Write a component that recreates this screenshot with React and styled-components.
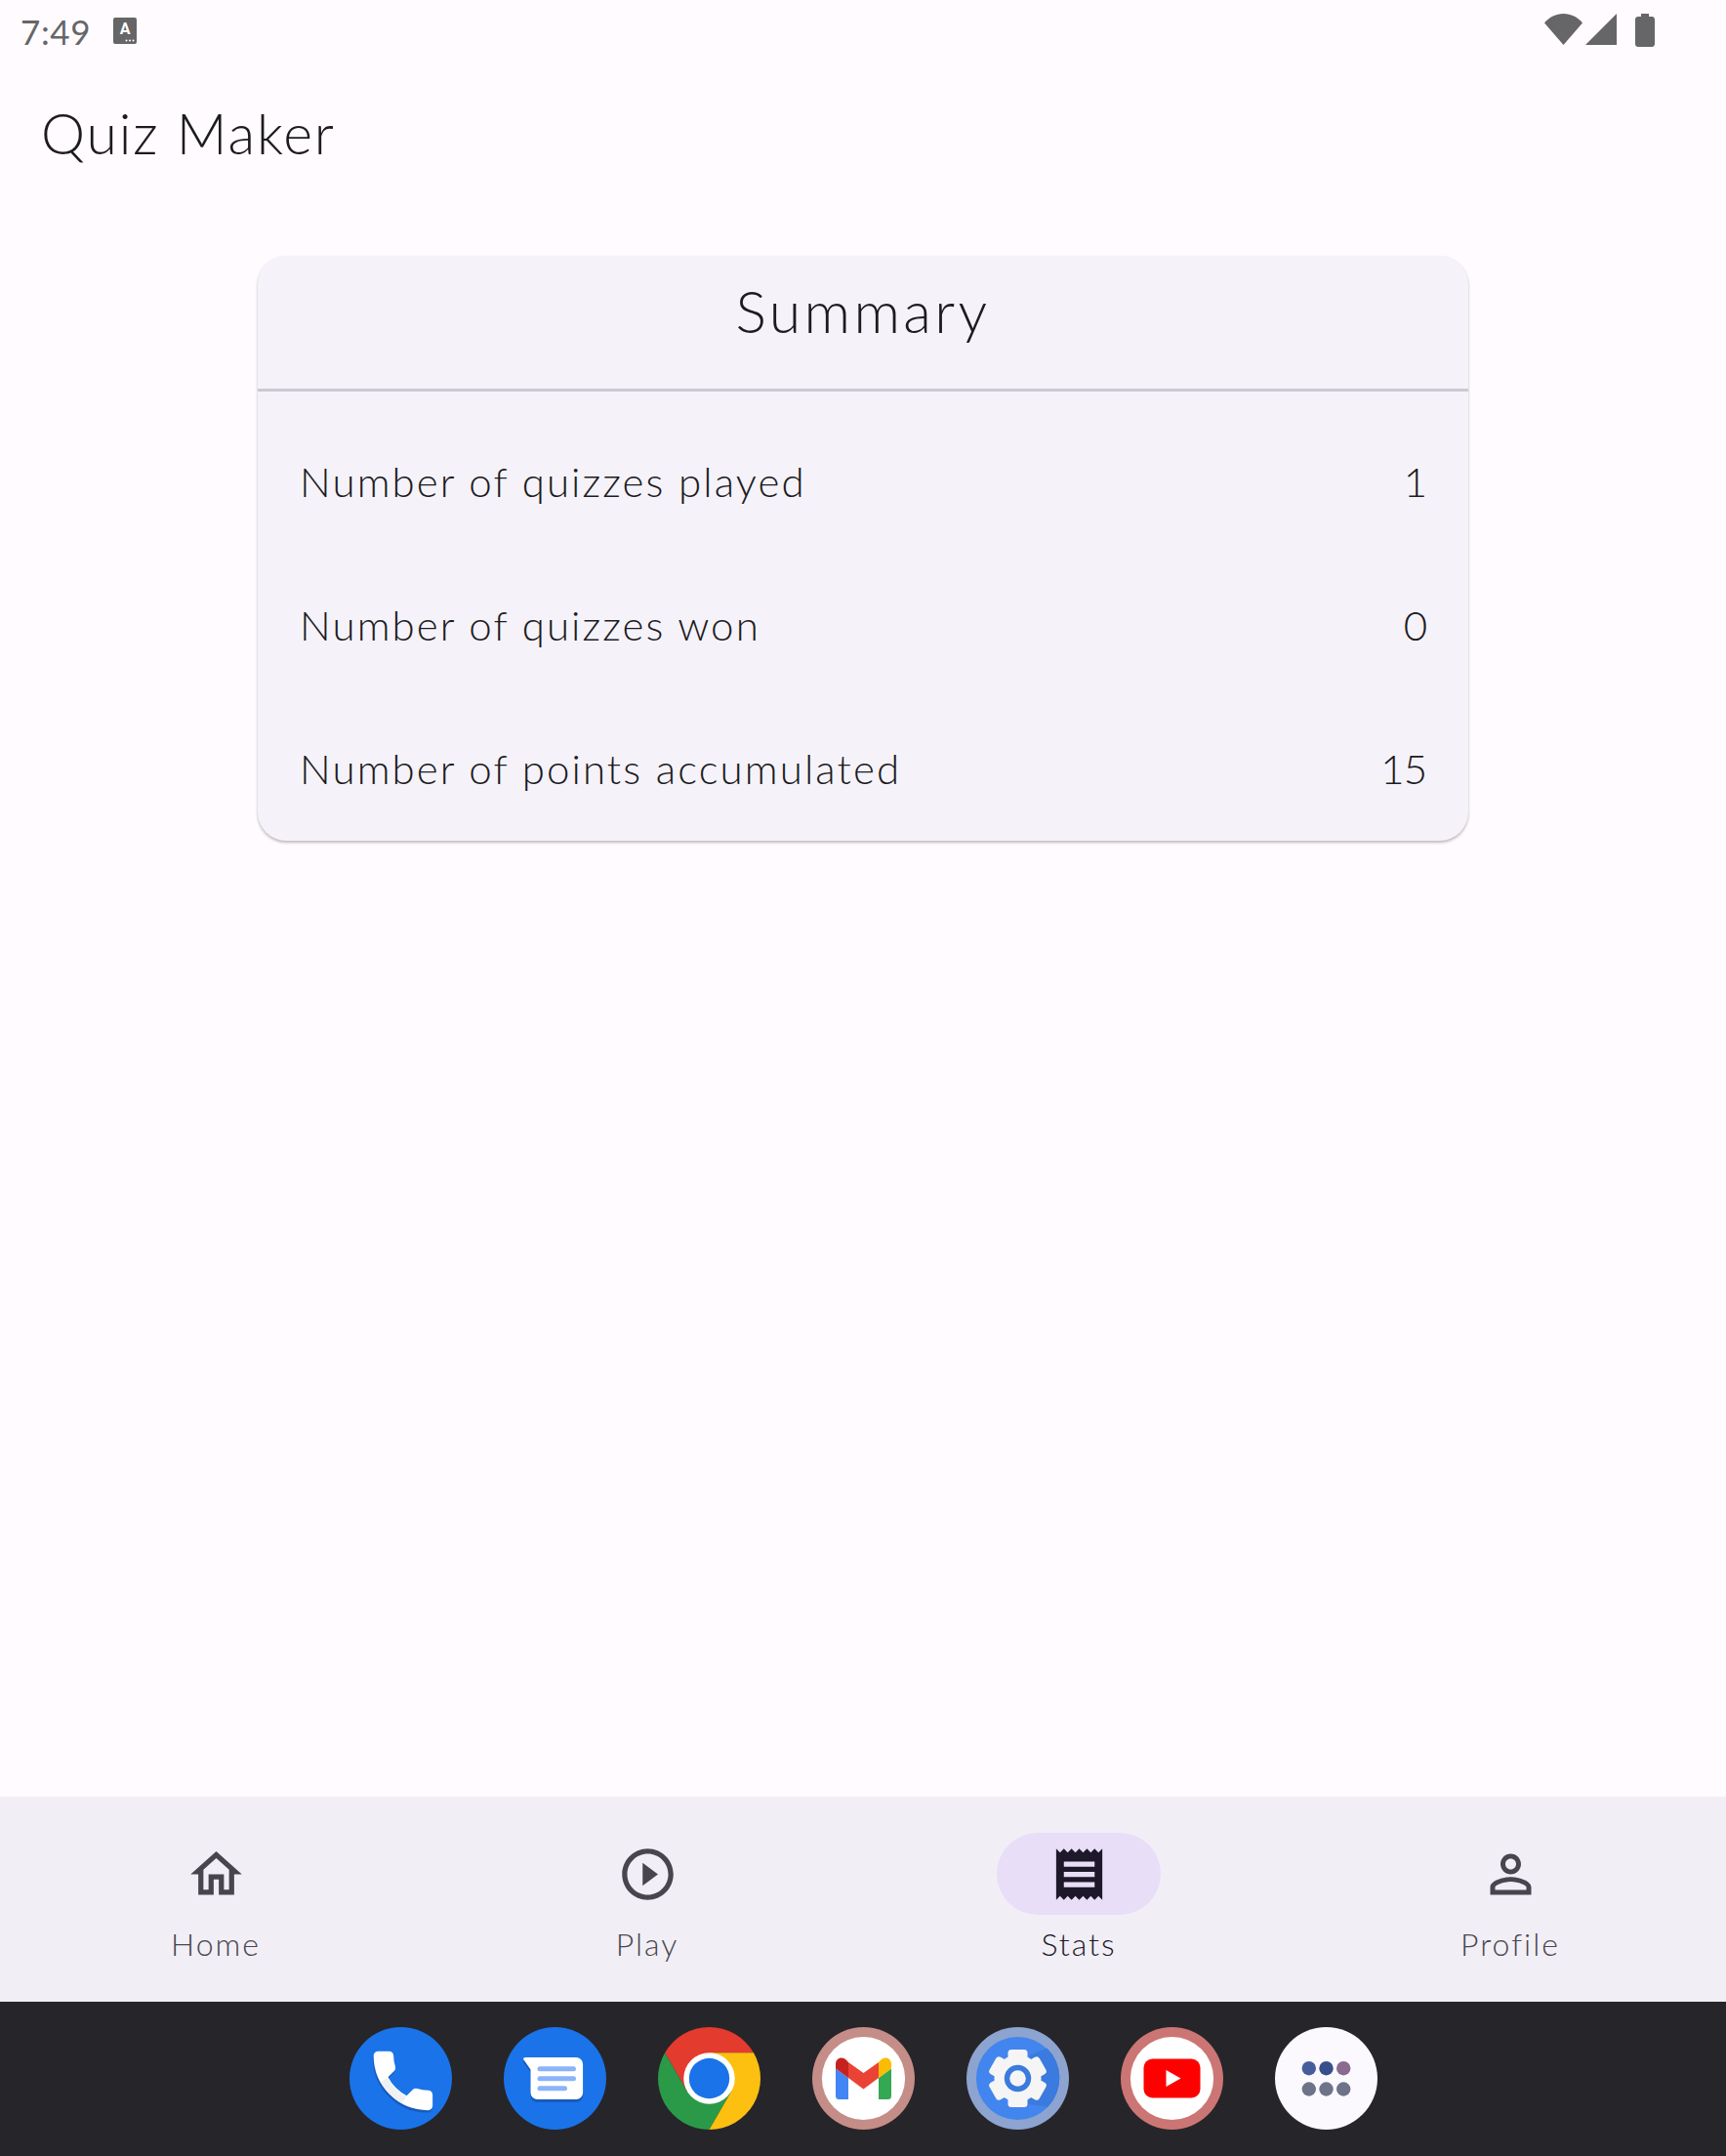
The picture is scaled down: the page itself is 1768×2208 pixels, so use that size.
import React from 'react'
import styled, {createGlobalStyle} from 'styled-components'

const GlobalStyle = createGlobalStyle`
    html, body {
        margin: 0;
        padding: 0;
        background: #fffbfe;
    }
`;

const Screen = styled.div`
    width: 1768px;
    height: 2208px;
    display: flex;
    flex-direction: column;
    overflow: hidden;
    background: #fffbfe;
    color: #1c1b1f;
    font-family: "Lato", "Open Sans", sans-serif;
    font-weight: 300;
`;

//status bar
const StatusBar = styled.div`
    height: 63px;
    flex: none;
    display: flex;
    justify-content: space-between;
    padding: 14px 73px 0 21px;
    box-sizing: border-box;
`;

const StatusLeft = styled.div`
    display: flex;
    align-items: flex-start;
    gap: 23px;
`;

const Clock = styled.span`
    font-size: 35px;
    line-height: 36px;
    letter-spacing: 0.6px;
    color: #666568;
    font-weight: 400;
`;

const StatusRight = styled.div`
    display: flex;
    align-items: flex-start;
`;

const KeyboardIcon = styled.svg`
    margin-top: 4px;
`;

const Signal = styled.svg`
    margin: 0 19px 0 3px;
`;

//app bar
const AppBar = styled.div`
    height: 151px;
    flex: none;
    padding: 0 42px;
    display: flex;
    align-items: flex-start;
`;

const AppTitle = styled.h1`
    margin: 38px 0 0;
    font-size: 57px;
    line-height: 70px;
    font-weight: 300;
    letter-spacing: 1.9px;
`;

const Content = styled.main`
    flex: 1;
    display: flex;
    justify-content: center;
    align-items: flex-start;
    padding-top: 48px;
`;

//card
const Card = styled.section`
    width: 1240px;
    background: #f5f3f9;
    border-radius: 29px;
    box-shadow: 0 2px 3px rgba(0, 0, 0, 0.26), 0 0 1px rgba(0, 0, 0, 0.05);
`;

const CardHeader = styled.div`
    height: 139px;
    box-sizing: border-box;
    border-bottom: 3px solid #cdc9d3;
    display: flex;
    justify-content: center;
    padding-top: 22px;
    font-size: 59px;
    line-height: 70px;
    letter-spacing: 3.4px;
`;

const CardBody = styled.div`
    padding: 18px 43px 1px 43px;
`;

const Row = styled.div`
    height: 147px;
    display: flex;
    justify-content: space-between;
    align-items: center;
    font-size: 42px;
    letter-spacing: 2.1px;
`;

const Value = styled.span`
    letter-spacing: -1px;
`;

//bottom navigation
const BottomNav = styled.nav`
    height: 210px;
    flex: none;
    display: flex;
    background: #f1eff5;
`;

const NavItem = styled.div`
    flex: 1;
    display: flex;
    flex-direction: column;
    align-items: center;
    padding-top: 37px;
    box-sizing: border-box;
`;

const Pill = styled.div`
    width: 168px;
    height: 84px;
    border-radius: 42px;
    display: flex;
    align-items: center;
    justify-content: center;
    background: ${props => props.$active ? '#e8def8' : 'transparent'};
    color: ${props => props.$active ? '#1d192b' : '#49454f'};
`;

const NavLabel = styled.span`
    margin-top: 10px;
    font-size: 32px;
    line-height: 40px;
    letter-spacing: 2px;
    color: ${props => props.$active ? '#1d192b' : '#49454f'};
`;

//launcher dock
const Dock = styled.footer`
    height: 158px;
    flex: none;
    background: #26252a;
    display: flex;
    justify-content: center;
    align-items: flex-start;
    gap: 53px;
    padding-top: 26px;
    box-sizing: border-box;
`;

const NAV_ICONS = {
    home: 'M12 5.69l5 4.5V18h-2v-6H9v6H7v-7.81l5-4.5M12 3L2 12h3v8h6v-6h2v6h6v-8h3L12 3z',
    play: 'M10 16.5l6-4.5-6-4.5v9zM12 2C6.48 2 2 6.48 2 12s4.48 10 10 10 10-4.48 10-10S17.52 2 12 2zm0 18c-4.41 0-8-3.59-8-8s3.59-8 8-8 8 3.59 8 8-3.59 8-8 8z',
    receipt: 'M18 17H6v-2h12v2zm0-4H6v-2h12v2zm0-4H6V7h12v2zM3 22l1.5-1.5L6 22l1.5-1.5L9 22l1.5-1.5L12 22l1.5-1.5L15 22l1.5-1.5L18 22l1.5-1.5L21 22V2l-1.5 1.5L18 2l-1.5 1.5L15 2l-1.5 1.5L12 2l-1.5 1.5L9 2 7.5 3.5 6 2 4.5 3.5 3 2v20z',
    person: 'M12 5.9c1.16 0 2.1.94 2.1 2.1s-.94 2.1-2.1 2.1S9.9 9.16 9.9 8s.94-2.1 2.1-2.1m0 9c2.97 0 6.1 1.46 6.1 2.1v1.1H5.9V17c0-.64 3.13-2.1 6.1-2.1M12 4C9.79 4 8 5.79 8 8s1.79 4 4 4 4-1.79 4-4-1.79-4-4-4zm0 9c-2.67 0-8 1.34-8 4v3h16v-3c0-2.66-5.33-4-8-4z',
}

const PHONE = 'M6.62 10.79c1.44 2.83 3.76 5.14 6.59 6.59l2.2-2.2c.27-.27.67-.36 1.02-.24 1.12.37 2.33.57 3.57.57.55 0 1 .45 1 1V20c0 .55-.45 1-1 1-9.39 0-17-7.61-17-17 0-.55.45-1 1-1h3.5c.55 0 1 .45 1 1 0 1.25.2 2.45.57 3.57.11.35.03.74-.25 1.02l-2.2 2.2z'

const stats = [
    {label: 'Number of quizzes played', value: 1},
    {label: 'Number of quizzes won', value: 0},
    {label: 'Number of points accumulated', value: 15},
]

const tabs = [
    {label: 'Home', icon: 'home'},
    {label: 'Play', icon: 'play'},
    {label: 'Stats', icon: 'receipt', active: true},
    {label: 'Profile', icon: 'person'},
]

// every dock icon is 105px, with 0,0 in the middle so units are pixels
const DockIcon = ({children}) => (
    <svg width="105" height="105" viewBox="-52.5 -52.5 105 105">{children}</svg>
)

const PhoneIcon = () => (
    <DockIcon>
        <circle r="52.5" fill="#1a73e8" />
        <g transform="translate(-36 -36) scale(3.2)">
            <path d={PHONE} fill="#185abc" stroke="#185abc" strokeWidth="0.9" strokeLinejoin="round" transform="translate(-0.25 0.75)" />
            <path d={PHONE} fill="#fff" stroke="#fff" strokeWidth="0.9" strokeLinejoin="round" />
            <path d="M4.9 12.5L6.9 10.9C8.3 13.6 10.4 15.7 13.1 17.1L11.6 19.2A17 17 0 0 1 4.9 12.5Z" fill="#eff0f3" />
        </g>
    </DockIcon>
)

const BUBBLE = 'M-30 -21.6H21.6a7 7 0 0 1 7 7V14.6a7 7 0 0 1-7 7H-18a7 7 0 0 1-7-7V-9L-32.3-19.6C-33-20.6-31.8-21.6-30-21.6Z'

const MessagesIcon = () => (
    <DockIcon>
        <circle r="52.5" fill="#1a73e8" />
        <path d={BUBBLE} fill="#185abc" transform="translate(0 3)" />
        <path d={BUBBLE} fill="#fff" />
        <rect x="-18" y="-12.3" width="39.5" height="5" rx="2.5" fill="#8ab4f8" />
        <rect x="-18" y="-2.3" width="39.5" height="5" rx="2.5" fill="#8ab4f8" />
        <rect x="-18" y="7.7" width="30.5" height="5" rx="2.5" fill="#8ab4f8" />
    </DockIcon>
)

const ChromeIcon = () => (
    <svg width="105" height="105" viewBox="-50 -50 100 100">
        <path d="M-43.3-25A50 50 0 0 1 43.3-25L0-25L-21.6 12.5Z" fill="#e33b2e" />
        <path d="M-43.3-25A50 50 0 0 0 0 50L21.6 12.5H-21.6Z" fill="#2a9a48" />
        <path d="M43.3-25A50 50 0 0 1 0 50L21.6 12.5L0-25Z" fill="#fdc010" />
        <circle r="25" fill="#fff" />
        <circle r="19.7" fill="#1a73e8" />
    </svg>
)

const GmailIcon = () => (
    <DockIcon>
        <circle r="52.5" fill="#c58d88" />
        <circle r="42.6" fill="#fff" />
        <path d="M-28.5-10V18a3.5 3.5 0 0 0 3.5 3.5H-15.5V-0.5Z" fill="#4285f4" />
        <path d="M15.5-0.5V21.5H25a3.5 3.5 0 0 0 3.5-3.5V-10Z" fill="#34a853" />
        <path d="M15.5-16.5V-0.5L28.5-10V-14.5C28.5-21 21-24 15.5-16.5Z" fill="#fbbc04" />
        <path d="M-15.5-16.5L0-5.5L15.5-16.5V-0.5L0 11L-15.5-0.5Z" fill="#ea4335" />
        <path d="M-28.5-10V-14.5C-28.5-21-21-24-15.5-16.5V-0.5Z" fill="#c5221f" />
    </DockIcon>
)

const SettingsIcon = () => (
    <DockIcon>
        <circle r="52.5" fill="#8ca4cf" />
        <circle r="42.6" fill="#4285ee" />
        <path d="M13-24L30-31A42.6 42.6 0 0 1 31 29L15 27L-10 24Z" fill="#3b7ade" />
        {[0, 60, 120, 180, 240, 300].map(angle => (
            <rect key={angle} x="-10" y="-29.5" width="20" height="16" rx="3.5" fill="#f5f5f5" transform={`rotate(${angle})`} />
        ))}
        <circle r="24" fill="#f5f5f5" />
        <circle r="13.7" fill="#3b7ade" />
        <circle r="8.3" fill="#f5f5f5" />
    </DockIcon>
)

const YoutubeIcon = () => (
    <DockIcon>
        <circle r="52.5" fill="#cb7674" />
        <circle r="42.6" fill="#fff" />
        <rect x="-29" y="-20" width="58" height="40" rx="9" fill="#ff0000" />
        <path d="M-6-8.5L9 0L-6 8.5Z" fill="#fff" />
    </DockIcon>
)

const AppsIcon = () => (
    <DockIcon>
        <circle r="52.5" fill="#fbf9fe" />
        <circle cx="-17.7" cy="-10.3" r="7.2" fill="#475d9b" />
        <circle cx="0" cy="-10.3" r="7.2" fill="#394f8c" />
        <circle cx="17.7" cy="-10.3" r="7.2" fill="#8a6a8e" />
        <circle cx="-17.7" cy="11" r="7.2" fill="#6f7388" />
        <circle cx="0" cy="11" r="7.2" fill="#6f7388" />
        <circle cx="17.7" cy="11" r="7.2" fill="#6f7388" />
    </DockIcon>
)

export default function App() {
    return (
        <Screen>
            <GlobalStyle />

            <StatusBar>
                <StatusLeft>
                    <Clock>7:49</Clock>
                    <KeyboardIcon width="24" height="27" viewBox="0 0 24 27">
                        <rect width="24" height="27" rx="2" fill="#666568" />
                        <text x="12" y="17" textAnchor="middle" fontSize="16" fontWeight="700" fontFamily="Roboto, sans-serif" fill="#fff">A</text>
                        <circle cx="13.5" cy="23.5" r="1" fill="#fff" />
                        <circle cx="17" cy="23.5" r="1" fill="#fff" />
                        <circle cx="20.5" cy="23.5" r="1" fill="#fff" />
                    </KeyboardIcon>
                </StatusLeft>
                <StatusRight>
                    <svg width="39" height="32" viewBox="0 0 39 32">
                        <path d="M0 9.5C5 3.5 12 0 19.5 0S34 3.5 39 9.5L19.5 32Z" fill="#666568" />
                    </svg>
                    <Signal width="32" height="32" viewBox="0 0 32 32">
                        <path d="M32 0V32H0Z" fill="#666568" />
                    </Signal>
                    <svg width="20" height="34" viewBox="0 0 20 34">
                        <path d="M6 0H14V3H17C18.7 3 20 4.3 20 6V31C20 32.7 18.7 34 17 34H3C1.3 34 0 32.7 0 31V6C0 4.3 1.3 3 3 3H6Z" fill="#666568" />
                    </svg>
                </StatusRight>
            </StatusBar>

            <AppBar>
                <AppTitle>Quiz Maker</AppTitle>
            </AppBar>

            <Content>
                <Card>
                    <CardHeader>Summary</CardHeader>
                    <CardBody>
                        {stats.map((stat, key) => (
                            <Row key={key}>
                                <span>{stat.label}</span>
                                <Value>{stat.value}</Value>
                            </Row>
                        ))}
                    </CardBody>
                </Card>
            </Content>

            <BottomNav>
                {tabs.map(tab => (
                    <NavItem key={tab.label}>
                        <Pill $active={tab.active}>
                            <svg width="63" height="63" viewBox="0 0 24 24" fill="currentColor">
                                <path d={NAV_ICONS[tab.icon]} />
                            </svg>
                        </Pill>
                        <NavLabel $active={tab.active}>{tab.label}</NavLabel>
                    </NavItem>
                ))}
            </BottomNav>

            <Dock>
                <PhoneIcon />
                <MessagesIcon />
                <ChromeIcon />
                <GmailIcon />
                <SettingsIcon />
                <YoutubeIcon />
                <AppsIcon />
            </Dock>
        </Screen>
    )
}
